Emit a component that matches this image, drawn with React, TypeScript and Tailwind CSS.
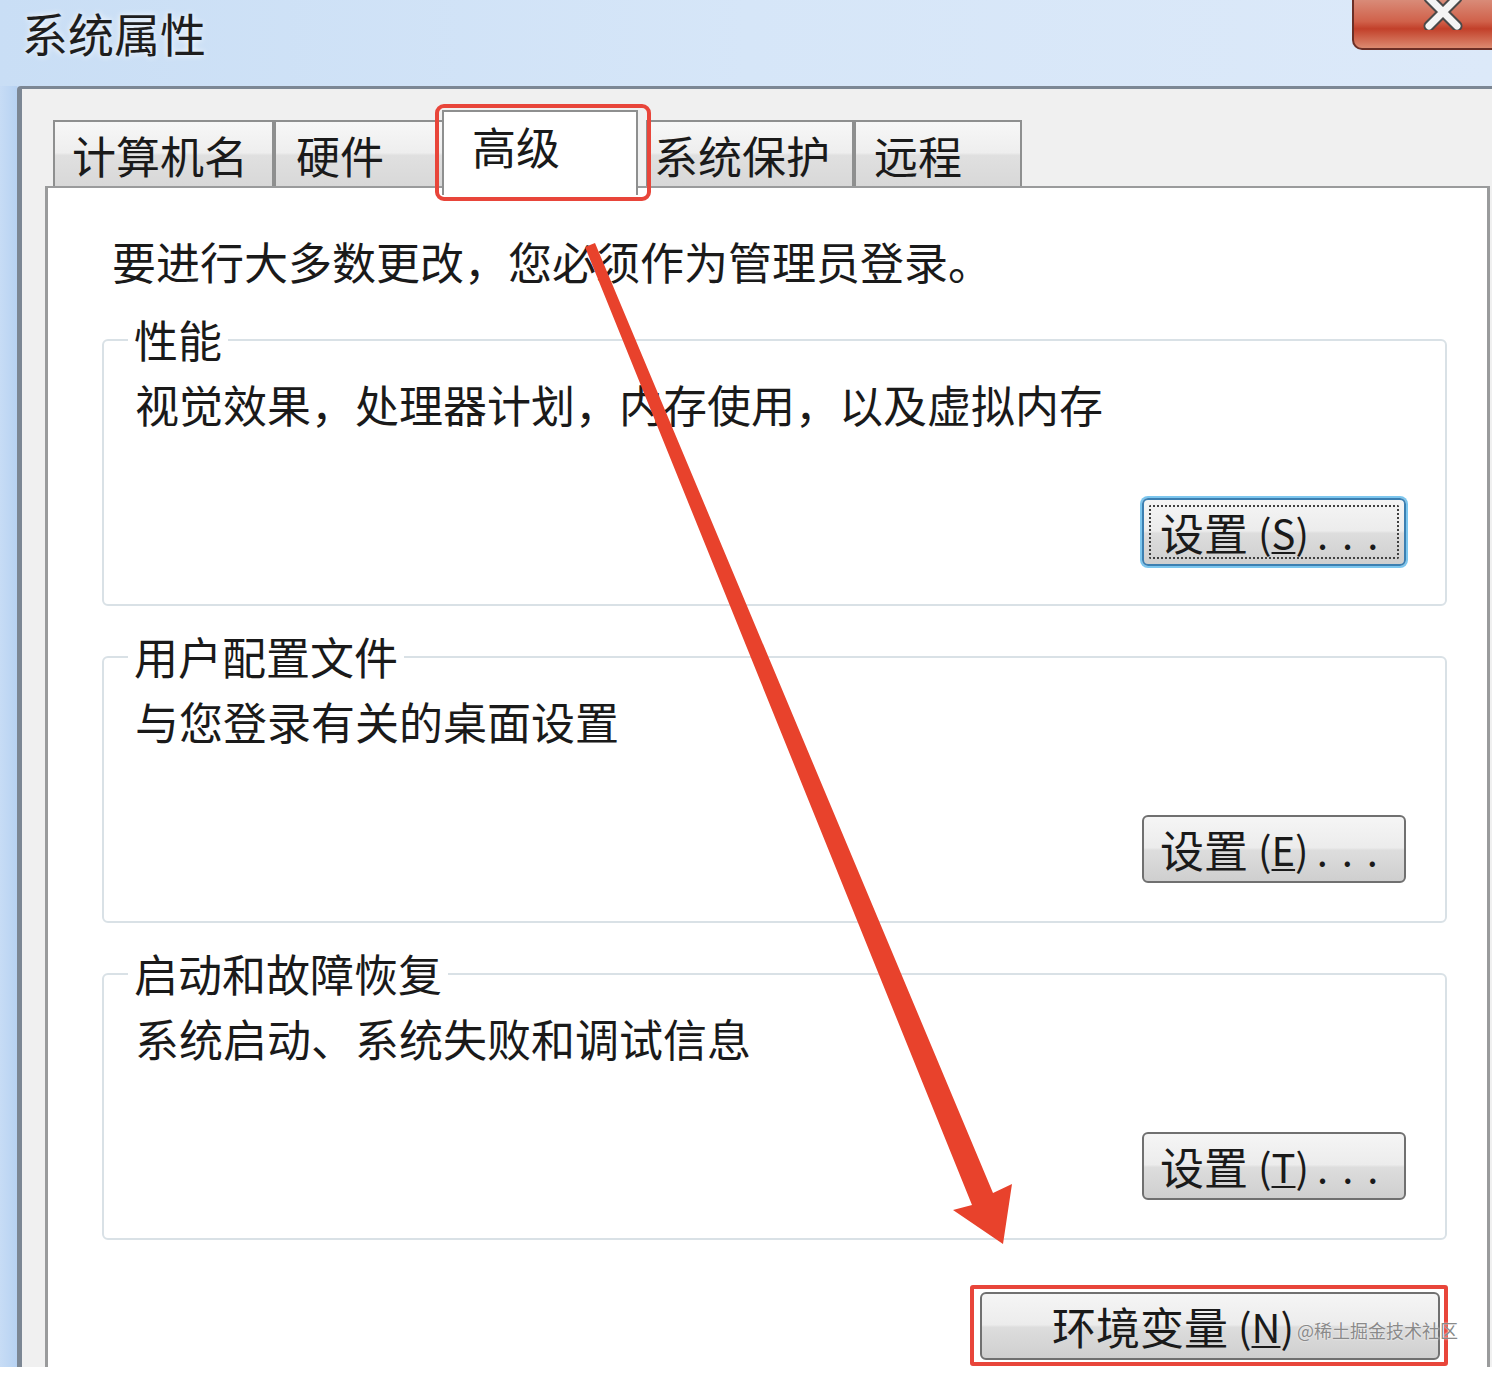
import React from "react"

const cjk = "font-['Noto_Sans_CJK_SC',sans-serif]"

function WinButton({
  label,
  mn,
  focus = false,
  dots = true,
  className = "",
}: {
  label: string
  mn: string
  focus?: boolean
  dots?: boolean
  className?: string
}) {
  return (
    <div
      className={`relative flex h-[68px] items-center rounded-[6px] border-2 bg-[linear-gradient(to_bottom,#f5f5f5_0%,#ececec_48%,#dddddd_52%,#cfcfcf_100%)] text-[44px] leading-none text-[#1a1a1a] ${
        focus ? "border-[#3c7fb1] shadow-[0_0_0_2px_#7cc6ee]" : "border-[#707070]"
      } ${className}`}
    >
      {focus && (
        <span className="pointer-events-none absolute inset-[5px] rounded-[2px] border-2 border-dotted border-[#404040]" />
      )}
      <span>{label}</span>
      <span className="ml-[10px] text-[40px]">
        (<span className="underline decoration-2 underline-offset-[3px]">{mn}</span>)
      </span>
      {dots && <span className="ml-[8px] text-[40px] tracking-[14px]">...</span>}
    </div>
  )
}

function Group({
  title,
  desc,
  button,
}: {
  title: string
  desc: string
  button: React.ReactNode
}) {
  return (
    <div className="relative ml-[54px] mr-[40px] flex h-[267px] flex-col rounded-[6px] border-2 border-[#d9e1e6] pl-[31px] pt-[41px]">
      <div className="absolute -top-[24px] left-[24px] bg-white px-[6px] text-[44px] leading-[44px] text-[#1a1a1a]">
        {title}
      </div>
      <div className="text-[44px] leading-[44px] text-[#1a1a1a]">{desc}</div>
      <div className="mt-auto mb-[38px] mr-[39px] self-end">{button}</div>
    </div>
  )
}

function Tab({
  label,
  className,
  active = false,
}: {
  label: string
  className: string
  active?: boolean
}) {
  if (active) {
    return (
      <div
        className={`relative z-10 -mb-[9px] flex h-[85px] items-start border-2 border-b-0 border-[#8e8f8f] bg-white pt-[12px] text-[44px] leading-[44px] text-[#1a1a1a] ${className}`}
      >
        {label}
      </div>
    )
  }
  return (
    <div
      className={`flex h-[66px] items-center border-2 border-b-0 border-[#8e8f8f] bg-[linear-gradient(to_bottom,#f7f7f7_0%,#eeeeee_48%,#e0e0e0_52%,#d8d8d8_100%)] pt-[2px] text-[44px] leading-[44px] text-[#1a1a1a] ${className}`}
    >
      {label}
    </div>
  )
}

export default function App() {
  return (
    <div className={`relative h-[1376px] w-[1492px] overflow-hidden bg-white ${cjk}`}>
      <div className="flex h-[1367px] flex-col bg-[#c4daf4]">
        {/* title bar */}
        <div className="flex h-[86px] items-start justify-between bg-[linear-gradient(to_right,#c9def5_0%,#d6e6f8_50%,#dce9f9_100%)]">
          <div className="ml-[22px] mt-[2px] text-[46px] leading-[60px] text-[#1e1e1e] [text-shadow:0_0_6px_#ffffff]">
            系统属性
          </div>
          <div className="relative flex h-[50px] w-[140px] items-start justify-center rounded-bl-[10px] border-b-2 border-l-2 border-[#6b2f26] bg-[linear-gradient(to_bottom,#d98b78_0%,#d0614a_45%,#c2402a_60%,#dc8a70_100%)] pl-[40px]">
            <svg width="40" height="34" viewBox="0 0 40 34" className="-mt-[4px]">
              <path d="M6 2 L34 30 M34 2 L6 30" stroke="#4a4a4a" strokeWidth="11" strokeLinecap="round" />
              <path d="M6 2 L34 30 M34 2 L6 30" stroke="#f4f4f4" strokeWidth="7" strokeLinecap="round" />
            </svg>
          </div>
        </div>

        {/* body */}
        <div className="flex flex-1">
          <div className="w-[17px] bg-[linear-gradient(to_right,#c7dcf5,#b7d2f2)]" />
          <div className="flex flex-1 flex-col rounded-tl-[4px] border-l-[5px] border-t-[3px] border-[#7c8794] bg-[#f0f0f0] pl-[23px]">
            {/* tab row */}
            <div className="flex h-[97px] items-end pl-[8px]">
              <Tab label="计算机名" className="w-[221px] pl-[17px]" />
              <Tab label="硬件" className="w-[170px] pl-[20px]" />
              <Tab label="高级" className="-ml-[2px] w-[196px] pl-[28px]" active />
              <Tab label="系统保护" className="ml-[8px] w-[208px] pl-[6px]" />
              <Tab label="远程" className="w-[168px] pl-[18px]" />
            </div>

            {/* tab page */}
            <div className="mr-[2px] flex flex-1 flex-col border-l-[3px] border-r-[3px] border-t-2 border-[#9a9b9c] bg-white">
              <div className="ml-[64px] mt-[51px] text-[44px] leading-[44px] text-[#1a1a1a]">
                要进行大多数更改，您必须作为管理员登录。
              </div>

              <div className="mt-[56px] flex flex-col gap-[50px]">
                <Group
                  title="性能"
                  desc="视觉效果，处理器计划，内存使用，以及虚拟内存"
                  button={<WinButton label="设置" mn="S" focus className="w-[264px] pl-[16px]" />}
                />
                <Group
                  title="用户配置文件"
                  desc="与您登录有关的桌面设置"
                  button={<WinButton label="设置" mn="E" className="w-[264px] pl-[16px]" />}
                />
                <Group
                  title="启动和故障恢复"
                  desc="系统启动、系统失败和调试信息"
                  button={<WinButton label="设置" mn="T" className="w-[264px] pl-[16px]" />}
                />
              </div>

              <div className="ml-[922px] mt-[45px] w-[478px] rounded-[3px] border-4 border-[#e8453a] pb-[2px] pl-[6px] pr-[4px] pt-[3px]">
                <WinButton label="环境变量" mn="N" dots={false} className="w-full pl-[70px]" />
              </div>
            </div>
          </div>
        </div>
      </div>

      {/* red highlight around the active tab */}
      <div className="pointer-events-none absolute left-[435px] top-[104px] h-[97px] w-[216px] rounded-[9px] border-4 border-[#e8453a]" />

      {/* watermark */}
      <div className="absolute left-[1297px] top-[1319px] text-[18px] leading-[22px] text-[#8a8a8a] [text-shadow:0_0_2px_#ffffff]">
        @稀土掘金技术社区
      </div>

      {/* red annotation arrow */}
      <svg className="pointer-events-none absolute left-0 top-0" width="1492" height="1376">
        <path
          d="M585 247 L595 243 L993 1193 L1012 1184 L1003 1244 L953 1210 L972 1205 Z"
          fill="#e8422c"
        />
      </svg>
    </div>
  )
}
